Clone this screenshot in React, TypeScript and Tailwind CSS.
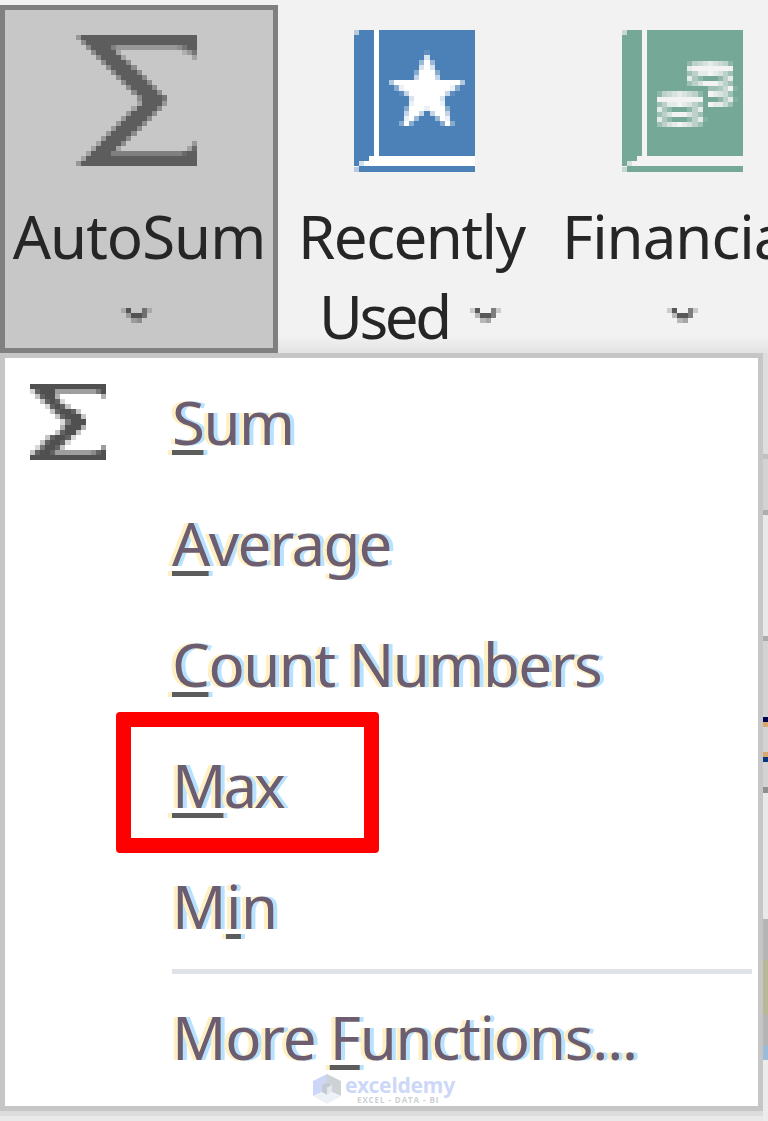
import clsx from "clsx";

// Each digit is the ink strength of one cell, "." is an empty cell.
const SIGMA_LARGE = [
  "499999999999999999999999",
  ".59999999999999999999999",
  "..5999964444444444445799",
  "...599993............247",
  "....599993.............3",
  ".....599995.............",
  "......599995............",
  ".......599995...........",
  "........599995..........",
  ".........599995.........",
  "..........599995........",
  "...........599995.......",
  "............599997......",
  "............399994......",
  "...........399995.......",
  "..........499995........",
  ".........499995.........",
  "........499995..........",
  ".......499995...........",
  "......499995............",
  ".....499995.............",
  "....399995.............4",
  "...399993.............38",
  "..3999966666666666666899",
  ".39999999999999999999999",
  "499999999999999999999999",
];

const SIGMA_SMALL = [
  "999999999999999",
  "289995555555579",
  ".38994........4",
  "..38982........",
  "...28983.......",
  "....389983.....",
  ".....389993....",
  "......27999....",
  "......49994....",
  ".....38993.....",
  "...389982......",
  "..389982.......",
  ".279983.......5",
  "389985555555689",
  "999999999999999",
];

const STAR = [
  ".......1.......",
  ".......7.......",
  "......494......",
  "......797......",
  ".....39993.....",
  ".....69996.....",
  "599999999999995",
  ".3899999999983.",
  "..16999999961..",
  "....7999997....",
  "....8999998....",
  "...399989993...",
  "...6996.6996...",
  "...894...498...",
  "..393.....393..",
];

const COINS = [
  "......256787652.",
  "......899999999.",
  "......358898753.",
  "......842...258.",
  "......357999753.",
  "..........334691",
  "256787652.98763.",
  "999999999...2581",
  "358898753.98863.",
  "842...258.......",
  "357999753.......",
  "842...2581......",
  "357898753.......",
];

const CHEVRON = ["28..62", ".3886.", "..34.."];

type PixelIconProps = { rows: string[]; className: string; x?: number; y?: number; width?: number; height?: number };

function PixelIcon({ rows, ...props }: PixelIconProps) {
  return (
    <svg
      viewBox={`0 0 ${rows[0].length} ${rows.length}`}
      preserveAspectRatio="none"
      shapeRendering="crispEdges"
      fill="currentColor"
      {...props}
    >
      {rows.flatMap((row, y) =>
        [...row].map((c, x) =>
          c === "." ? null : (
            <rect key={`${x}-${y}`} x={x} y={y} width="1" height="1" opacity={Number(c) / 9} />
          )
        )
      )}
    </svg>
  );
}

function Book({ kind }: { kind: "star" | "coins" }) {
  const star = kind === "star";
  const paper = star ? "#ffffff" : "#f3f3f3";
  return (
    <svg
      className={clsx("block h-[142px] w-[121px]", star ? "text-[#4c81b8]" : "text-[#75a896]")}
      viewBox="0 0 121 142"
      fill="currentColor"
    >
      <path d="M5 0H121V142H5V136H0V5H5Z" />
      <path d="M0 0H5V5H0ZM0 137H5V142H0Z" opacity="0.35" />
      <path d="M20 0H25V126H121V136H10V131H15V126H20Z" fill={paper} />
      <path d="M10 126H15V131H10Z" />
      <path d="M5 131H10V136H5Z" fill={paper} opacity="0.75" />
      {star ? (
        <PixelIcon rows={STAR} className="text-white" x={35} y={20} width={76} height={76} />
      ) : (
        <PixelIcon rows={COINS} className="text-[#f3f3f3]" x={35} y={31} width={81} height={66} />
      )}
    </svg>
  );
}

type MenuItem = { before?: string; accel: string; after: string; className: string };

const ITEMS: MenuItem[] = [
  { accel: "S", after: "um", className: "tracking-[-1.5px]" },
  { accel: "A", after: "verage", className: "tracking-[-1.7px]" },
  { accel: "C", after: "ount Numbers", className: "tracking-[-1.5px]" },
  { accel: "M", after: "ax", className: "tracking-[-3px]" },
  { before: "M", accel: "i", after: "n", className: "tracking-[-0.5px]" },
];

function ItemLabel({ before, accel, after, className }: MenuItem) {
  return (
    <span
      className={clsx(
        "whitespace-pre text-[#6d5d70] [text-shadow:-4px_0_#fff0c4,4px_0_#b6e2ff]",
        className
      )}
    >
      {before}
      <span className="underline decoration-[#5c5c5c] decoration-[5px] underline-offset-[5px] [text-decoration-skip-ink:none]">
        {accel}
      </span>
      {after}
    </span>
  );
}

// Slice of the worksheet visible to the right of the menu
const SHEET = [
  "h-[101px] bg-[#dedede]",
  "h-[5px] bg-[#c0c0c0]",
  "h-[51px] bg-[#d3d3d3]",
  "h-[5px] bg-[#adadad]",
  "h-[121px] bg-[#e9e9e9]",
  "h-[5px] bg-[#ababab]",
  "h-[76px] bg-[#d3d3d3]",
  "h-[5px] bg-[#000050]",
  "h-[5px] bg-[#d8a870]",
  "h-[25px] bg-[#d3d3d3]",
  "h-[5px] bg-[#d8a870]",
  "h-[5px] bg-[#083580]",
  "h-[25px] bg-[#d3d3d3]",
  "h-[6px] bg-[#8f8f8f]",
  "h-[126px] bg-[#e9e9e9]",
  "h-[41px] bg-[#b5b5b5]",
  "h-[55px] bg-[#b8b898]",
  "h-[30px] bg-[#b5b5b5]",
  "h-[15px] bg-[#9bbcd8]",
  "flex-1 bg-[#ececec]",
];

function Watermark() {
  return (
    <div className="absolute left-[308px] top-[716px] flex gap-1">
      <svg className="h-[30px] w-7" viewBox="0 0 28 30">
        <path d="M14 0L0 7V22L9 18V11L14 8Z" fill="#ccd7f8" />
        <path d="M14 0L28 7V22L19 18V11L14 8Z" fill="#cdd2d5" />
        <path d="M0 22L9 18L14 21L19 18L28 22L14 30Z" fill="#edf1f8" />
        <path d="M14 8L9 11V18L14 21V14L19 11Z" fill="#c3cad0" />
        <path d="M14 14L19 11V18L14 21Z" fill="#e3e8ef" />
      </svg>
      <div className="flex flex-col">
        <span className="h-[21px] pt-px font-['Noto_Sans',sans-serif] text-[21px] font-bold leading-[21px] tracking-[-0.2px] text-[#cdd8f8]">
          exceldemy
        </span>
        <span className="pl-3 font-['Open_Sans',sans-serif] text-[8px] font-bold leading-[9px] tracking-[0.9px] text-[#cdd0d3]">
          EXCEL - DATA - BI
        </span>
      </div>
    </div>
  );
}

export default function App() {
  return (
    <div className="flex h-[1121px] w-[768px] flex-col overflow-hidden bg-[#f2f2f2] font-['Noto_Sans',sans-serif] text-[60px]">
      <div className="flex h-[353px] shrink-0 bg-linear-to-b from-[#f2f2f2] from-95% to-[#e3e3e3] pt-[5px] text-[#262626]">
        <button className="flex h-[348px] w-[278px] shrink-0 flex-col border-[5px] border-[#808080] bg-[#c7c7c7] pt-[25px]">
          <PixelIcon rows={SIGMA_LARGE} className="ml-[71px] h-[131px] w-[121px] text-[#5d5d5d]" />
          <span className="mt-[30px] h-20 whitespace-nowrap leading-[80px] tracking-[-1px]">AutoSum</span>
          <PixelIcon rows={CHEVRON} className="mt-[32px] ml-[116px] h-[15px] w-[31px] text-[#444]" />
        </button>
        <div className="w-[268px] shrink-0 pt-[25px]">
          <div className="pl-[76px]">
            <Book kind="star" />
          </div>
          <div className="mt-[24px] pl-[20px] leading-[80px] tracking-[-1.5px]">Recently</div>
          <div className="flex pl-[41px] leading-[80px] tracking-[-3.4px]">
            Used
            <PixelIcon rows={CHEVRON} className="mt-[32px] ml-[21px] h-[15px] w-[31px] text-[#444]" />
          </div>
        </div>
        <div className="min-w-0 flex-1 overflow-hidden pt-[25px]">
          <div className="pl-[76px]">
            <Book kind="coins" />
          </div>
          <div className="mt-[24px] whitespace-nowrap pl-[16px] leading-[80px] tracking-[-1px]">Financial</div>
          <PixelIcon rows={CHEVRON} className="mt-[32px] ml-[121px] h-[15px] w-[31px] text-[#444]" />
        </div>
      </div>

      <div className="flex min-h-0 flex-1">
        <div className="flex w-[763px] shrink-0 flex-col">
          <div className="relative h-[758px] border-[5px] border-[#c6c6c6] bg-white pt-1">
            {ITEMS.map((item, i) => (
              <div key={i} className="flex h-[121px] leading-[121px]">
                <div className="w-[167px] shrink-0 pt-[22px] pl-[25px]">
                  {i === 0 && <PixelIcon rows={SIGMA_SMALL} className="h-[76px] w-[76px] text-[#505050]" />}
                </div>
                <ItemLabel {...item} />
              </div>
            ))}
            <div className="mt-0.5 mr-[6px] ml-[167px] h-[5px] bg-[#dfe2e6]" />
            <div className="ml-[167px] h-[121px] leading-[127px]">
              <ItemLabel before="More " accel="F" after="unctions..." className="tracking-[-1.2px]" />
            </div>
            <div className="absolute top-[354px] left-[111px] h-[141px] w-[263px] rounded-[4px] border-[15px] border-[#ff0000]" />
            <Watermark />
          </div>
          <div className="h-[5px] bg-[#dcdcdc]" />
          <div className="flex-1 bg-[#e9e9e9]" />
        </div>
        <div className="flex flex-1 flex-col">
          {SHEET.map((cls, i) => (
            <div key={i} className={cls} />
          ))}
        </div>
      </div>
    </div>
  );
}
